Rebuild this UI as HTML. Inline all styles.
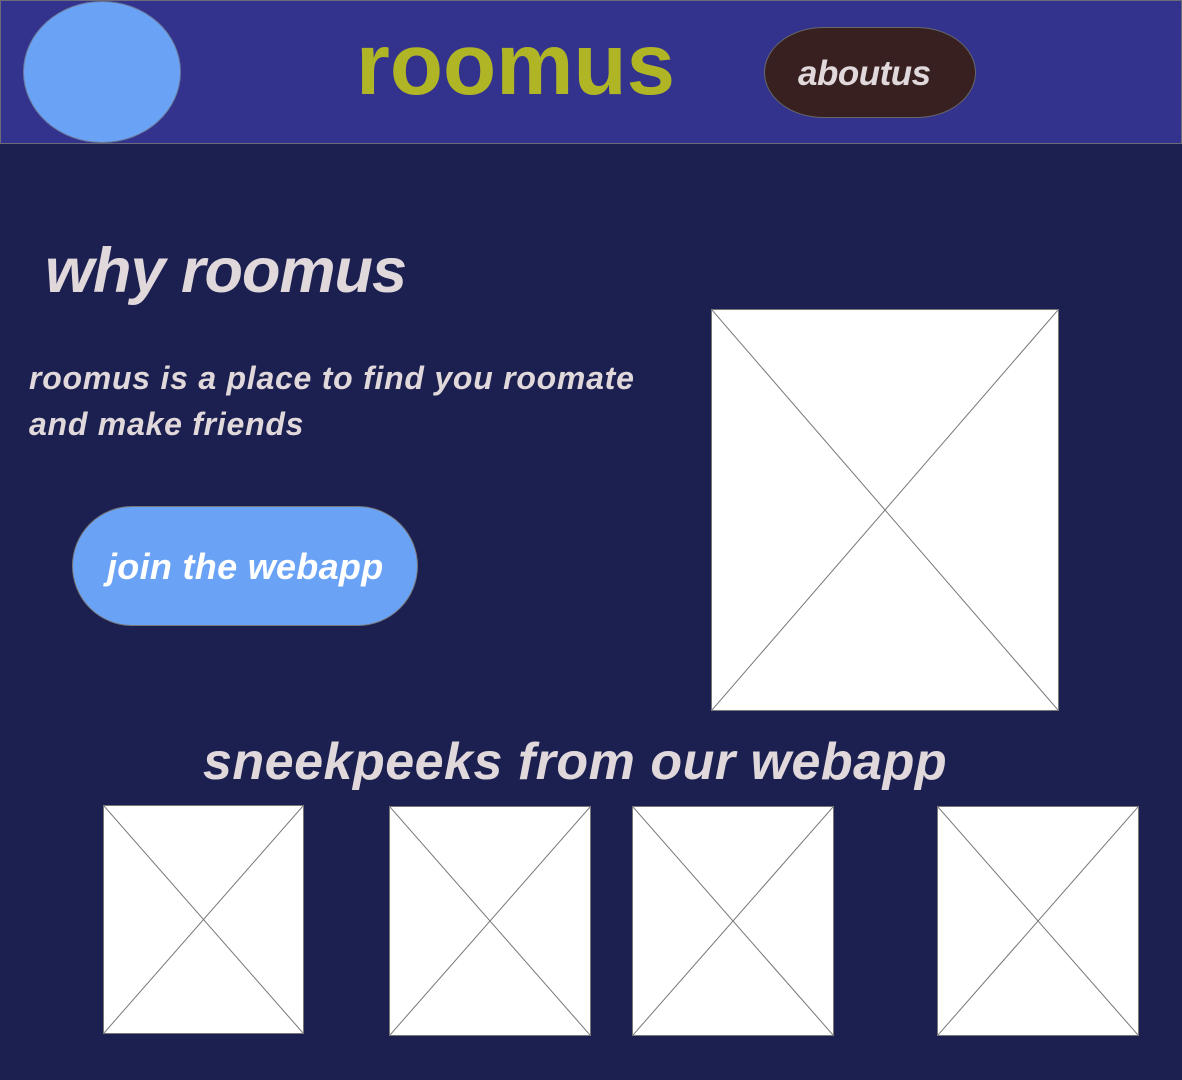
<!DOCTYPE html>
<html><head><meta charset="utf-8"><style>
*{margin:0;padding:0;box-sizing:border-box}
body{width:1182px;height:1080px;background:#1b2050;position:relative;overflow:hidden;font-family:"Liberation Sans",sans-serif}
.a{position:absolute;white-space:nowrap}
.hdr{left:0;top:0;width:1182px;height:144px;background:#33338e;border:1px solid #6a6a7a}
.img{position:absolute;background:#fff;border:1px solid #777}
.img svg{position:absolute;left:0;top:0;width:100%;height:100%}
.t{color:#e0d8da;font-weight:bold;font-style:italic}
</style></head><body>
<div class="a hdr"></div>
<div class="a" style="left:23px;top:1px;width:158px;height:142px;border-radius:50%;background:#6aa3f5;border:1px solid #6a7a9a"></div>
<div class="a" style="left:356px;top:15px;font-size:87px;font-weight:bold;color:#b0b526;letter-spacing:0;line-height:100px">roomus</div>
<div class="a" style="left:764px;top:27px;width:212px;height:91px;border-radius:60px/46px;background:#382020;border:1px solid #666"></div>
<div class="a t" style="left:798px;top:54px;font-size:35px;line-height:40px;letter-spacing:-0.5px">aboutus</div>
<div class="a t" style="left:45px;top:236px;font-size:63px;line-height:70px;letter-spacing:-1px">why roomus</div>
<div class="a t" style="left:29px;top:355px;font-size:32px;line-height:46px;letter-spacing:0.75px">roomus is a place to find you roomate<br>and make friends</div>
<div class="a" style="left:72px;top:506px;width:346px;height:120px;border-radius:60px;background:#6aa3f5;border:1px solid #777"></div>
<div class="a t" style="left:107px;top:545px;font-size:36px;line-height:44px;color:#fff;letter-spacing:0.3px">join the webapp</div>
<div class="a t" style="left:203px;top:732px;font-size:52px;line-height:60px;letter-spacing:0.5px">sneekpeeks from our webapp</div>
<div class="img" style="left:711px;top:309px;width:348px;height:402px"><svg viewBox="0 0 100 100" preserveAspectRatio="none"><path d="M0 0L100 100M100 0L0 100" stroke="#777" stroke-width="1" vector-effect="non-scaling-stroke"/></svg></div>
<div class="img" style="left:103px;top:805px;width:201px;height:229px"><svg viewBox="0 0 100 100" preserveAspectRatio="none"><path d="M0 0L100 100M100 0L0 100" stroke="#777" stroke-width="1" vector-effect="non-scaling-stroke"/></svg></div>
<div class="img" style="left:389px;top:806px;width:202px;height:230px"><svg viewBox="0 0 100 100" preserveAspectRatio="none"><path d="M0 0L100 100M100 0L0 100" stroke="#777" stroke-width="1" vector-effect="non-scaling-stroke"/></svg></div>
<div class="img" style="left:632px;top:806px;width:202px;height:230px"><svg viewBox="0 0 100 100" preserveAspectRatio="none"><path d="M0 0L100 100M100 0L0 100" stroke="#777" stroke-width="1" vector-effect="non-scaling-stroke"/></svg></div>
<div class="img" style="left:937px;top:806px;width:202px;height:230px"><svg viewBox="0 0 100 100" preserveAspectRatio="none"><path d="M0 0L100 100M100 0L0 100" stroke="#777" stroke-width="1" vector-effect="non-scaling-stroke"/></svg></div>
</body></html>
